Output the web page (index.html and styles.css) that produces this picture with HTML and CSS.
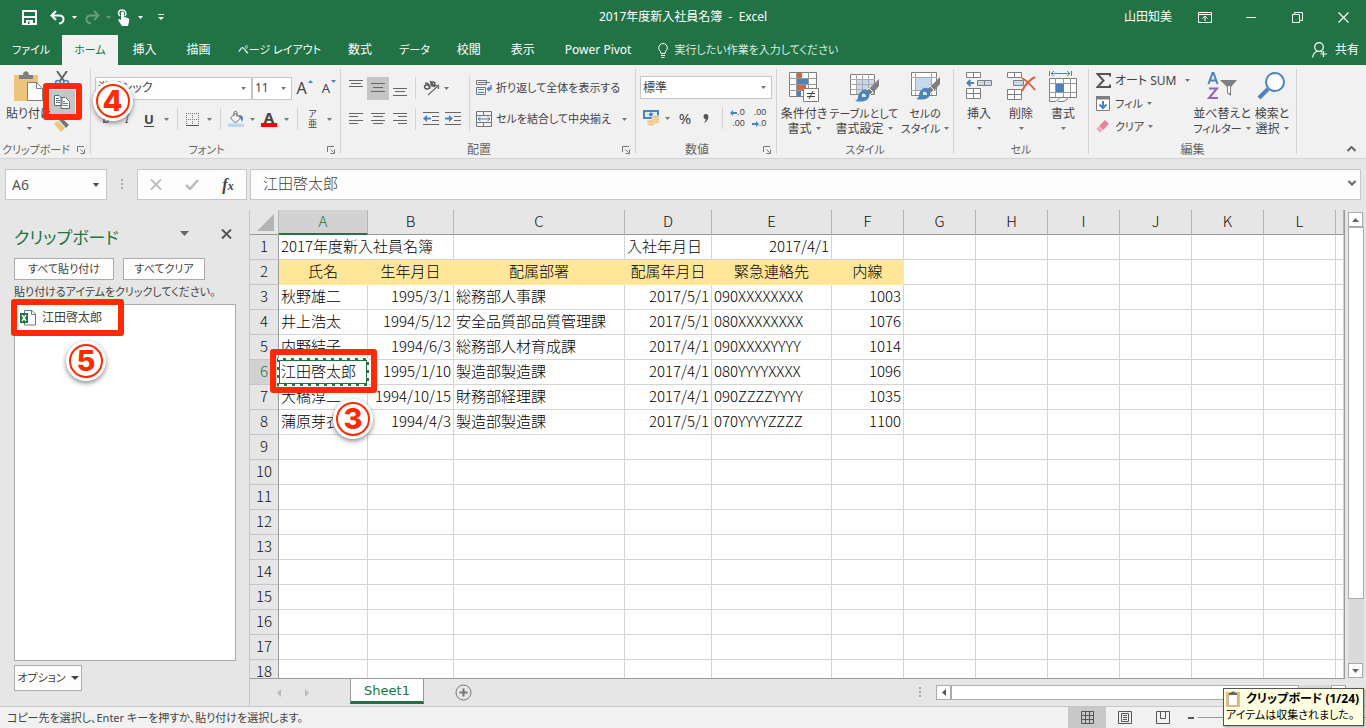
FILE: index.html
```html
<!DOCTYPE html>
<html lang="ja">
<head>
<meta charset="utf-8">
<title>2017年度新入社員名簿 - Excel</title>
<link rel="stylesheet" href="styles.css">
</head>
<body>
<svg class="defs" aria-hidden="true">
  <symbol id="caret" viewBox="0 0 5 3"><path d="M0 0h5L2.500 3z" fill="currentColor"/></symbol>
  <symbol id="launch" viewBox="0 0 8 8"><path d="M.5 6V.5H7M3.500 3.500l3 3M7.500 3.500v4h-4" fill="none" stroke="#777"/></symbol>
  <symbol id="brush" viewBox="0 0 24 24"><path d="M24 1v7l-6 7-4-4z" fill="#7f7f7f"/><path d="M14 10l4 4-3 3-4-4z" fill="#7f7f7f" stroke="#f1f1f1"/><path d="M8 12c4-1 8 3 6 7-2 5-8 5-14 4 3-1 3-3 3-5 1-3 3-5 5-6z" fill="#4a83bd"/><path d="M7 16c3-1 4 1 4 3l-4 0z" fill="#e3edf6"/></symbol>
</svg>

<header class="titlebar">
  <div class="quick">
    <button aria-label="上書き保存"><svg width="15" height="15" viewBox="0 0 15 15"><path d="M1 1h13v13H1z" fill="none" stroke="#fff" stroke-width="2"/><path d="M1 7h13" stroke="#fff" stroke-width="2"/><path d="M4 10h7v4H4z" fill="#fff"/><path d="M6 11.500h1.500V14H6z" fill="#217346"/></svg></button>
    <button aria-label="元に戻す"><svg width="15" height="15" viewBox="0 0 15 15"><path d="M6 1L1.500 5.500 6 10M2 5.500h7c6 0 6 7 0 8" fill="none" stroke="#fff" stroke-width="2"/></svg></button>
    <button aria-label="元に戻すの一覧"><svg class="caret"><use href="#caret"/></svg></button>
    <button class="dim" aria-label="やり直し"><svg width="15" height="15" viewBox="0 0 15 15"><path d="M9 1l4.500 4.500L9 10M13 5.500H6c-6 0-6 7 0 8" fill="none" stroke="#fff" stroke-width="2"/></svg></button>
    <button class="dim" aria-label="やり直しの一覧"><svg class="caret"><use href="#caret"/></svg></button>
    <button aria-label="タッチ/マウス モード"><svg width="13" height="17" viewBox="0 0 13 17"><path d="M3 7C0 4 2 1 5 1s5 3 3 6" fill="none" stroke="#fff" stroke-width="1.500"/><path d="M4 4c0-2 3-2 3 0v4l4 1c2 1 1 4 0 8H5L1 11l1-1 2 1z" fill="#fff"/></svg></button>
    <button aria-label="モードの一覧"><svg class="caret"><use href="#caret"/></svg></button>
    <button aria-label="クイック アクセスのカスタマイズ"><svg width="6" height="7" viewBox="0 0 6 7"><path d="M0 0h6v1H0zM0 3h6L3 6z" fill="#fff"/></svg></button>
  </div>
  <div class="doc-title">2017年度新入社員名簿&nbsp; - &nbsp;Excel</div>
  <div class="window">
    <span>山田知美</span>
    <button aria-label="リボンの表示オプション"><svg width="14" height="11" viewBox="0 0 14 11"><path d="M.5.5h13v10H.5zM1 2.500h12M7 9V4.500M4.500 6.500L7 4l2.500 2.500" fill="none" stroke="#fff"/></svg></button>
    <button aria-label="最小化"><svg width="11" height="11" viewBox="0 0 11 11"><path d="M0 5.500h10" stroke="#fff"/></svg></button>
    <button aria-label="元に戻す(縮小)"><svg width="11" height="11" viewBox="0 0 11 11"><path d="M.5 2.500h7v8h-7zM2.500 2V.5h8v8H8" fill="none" stroke="#fff"/></svg></button>
    <button aria-label="閉じる"><svg width="11" height="11" viewBox="0 0 11 11"><path d="M.5.5l10 10M10.500.5l-10 10" fill="none" stroke="#fff" stroke-width="1.200"/></svg></button>
  </div>
</header>

<nav class="tabs">
  <button class="kana">ファイル</button><button class="kana active">ホーム</button><button>挿入</button><button>描画</button><button class="kana">ページ レイアウト</button><button>数式</button><button class="kana">データ</button><button>校閲</button><button>表示</button><button>Power Pivot</button>
  <button class="kana tell"><svg width="10" height="15" viewBox="0 0 10 15"><path d="M3 10.500C3 8 .7 7.500.7 4.800a4.300 4.300 0 0 1 8.600 0C9.300 7.500 7 8 7 10.500zM3 12.500h4M3.500 14.500h3" fill="none" stroke="#fff"/></svg>実行したい作業を入力してください</button>
  <button class="share"><svg width="15" height="16" viewBox="0 0 15 16"><circle cx="7" cy="5" r="4.300" fill="none" stroke="#fff" stroke-width="1.200"/><path d="M.7 15.500C1 12 3 10 5.500 9M8.500 9l2 1.500M11.500 9v6M8.500 12H15" fill="none" stroke="#fff" stroke-width="1.200"/></svg>共有</button>
</nav>

<section class="ribbon">
  <div class="group clip">
    <div class="body">
      <button class="big paste"><svg width="32" height="32" viewBox="0 0 32 32"><path d="M1 4h24v26H1z" fill="#edc47b"/><path d="M6 8V4h4c0-5 6-5 6 0h4v4z" fill="#7f7f7f"/><path d="M14.500 11.500h9l6 6v12h-15z" fill="#fff" stroke="#7f7f7f"/><path d="M23.500 11.500v6h6" fill="none" stroke="#7f7f7f"/></svg><span>貼り付け</span><svg class="caret"><use href="#caret"/></svg></button>
      <div class="clip-tools">
        <button aria-label="切り取り"><svg width="16" height="16" viewBox="0 0 16 16"><path d="M3 0l7 10M13 0L6 10" stroke="#666" stroke-width="2"/><circle cx="4" cy="12" r="2.500" fill="none" stroke="#4a83bd" stroke-width="1.500"/><circle cx="12" cy="12" r="2.500" fill="none" stroke="#4a83bd" stroke-width="1.500"/></svg></button>
        <div class="copy-wrap">
        <button class="copy" aria-label="コピー"><svg width="16" height="14" viewBox="0 0 16 14"><path d="M.5.500H5L8 3.500v7H.5zM7 2.500h4.500l4 4v7H7z" fill="#fff" stroke="#666"/><path d="M2 3.500h3M2 5.500h4M2 7.500h4M9 6.500h2M9 8.500h5M9 10.500h5" stroke="#4a83bd"/></svg></button>
        <i class="mark mark-copy"></i><b class="num num-copy">4</b>
        </div>
        <button aria-label="書式のコピー/貼り付け"><svg width="16" height="16" viewBox="0 0 16 16"><path d="M0 7l4-3 7 7-4 4z" fill="#edc47b"/><path d="M5 3l3-2 7 7-3 3z" fill="#777"/></svg></button>
      </div>
    </div>
    <div class="foot"><span class="kana">クリップボード</span><button aria-label="クリップボードの詳細"><svg width="8" height="8"><use href="#launch"/></svg></button></div>
  </div>

  <div class="group font">
    <div class="body stack">
      <div class="row font-top">
        <label class="combo"><select aria-label="フォント"><option>游ゴシック</option></select><svg class="caret"><use href="#caret"/></svg></label>
        <label class="combo"><select aria-label="フォント サイズ"><option>11</option></select><svg class="caret"><use href="#caret"/></svg></label>
        <button class="grow">A<svg width="5" height="3" viewBox="0 0 5 3"><path d="M0 3h5L2.500 0z" fill="#4a83bd"/></svg></button>
        <button class="grow small">A<svg width="5" height="3" viewBox="0 0 5 3"><path d="M0 0h5L2.500 3z" fill="#4a83bd"/></svg></button>
      </div>
      <div class="row font-low">
        <button class="b">B</button><button class="i">I</button><button class="u">U</button><button aria-label="下線の種類"><svg class="caret"><use href="#caret"/></svg></button><hr>
        <button aria-label="罫線"><svg width="13" height="13" viewBox="0 0 13 13"><path d="M0 .5h13M0 6.500h13M.5 0v12M6.500 0v12M12.500 0v12" stroke="#777" stroke-dasharray="1 1"/><path d="M0 12.500h13" stroke="#555"/></svg></button><button aria-label="罫線の一覧"><svg class="caret"><use href="#caret"/></svg></button><hr>
        <button aria-label="塗りつぶしの色"><svg width="16" height="16" viewBox="0 0 16 16"><path d="M2.500 7l5-5 5 5-5 5z" fill="#fff" stroke="#666"/><path d="M6 5V1.500C6 0 9 0 9 1.500V6" fill="none" stroke="#666"/><path d="M11 4c4 0 5 3 3 7-1-2-1-4-3-5z" fill="#4a83bd"/><path d="M0 12.500h16V16H0z" fill="#bdd7f0"/></svg></button><button aria-label="色の一覧"><svg class="caret"><use href="#caret"/></svg></button>
        <button class="fontcolor">A</button><button aria-label="フォントの色の一覧"><svg class="caret"><use href="#caret"/></svg></button><hr>
        <button class="ruby"><span>ア</span><span>亜</span></button><button aria-label="ふりがなの一覧"><svg class="caret"><use href="#caret"/></svg></button>
      </div>
    </div>
    <div class="foot"><span class="kana">フォント</span><button aria-label="フォントの詳細"><svg width="8" height="8"><use href="#launch"/></svg></button></div>
  </div>

  <div class="group align">
    <div class="body">
      <div class="stack">
        <div class="row al">
          <button aria-label="上揃え"><svg width="14" height="16" viewBox="0 0 14 16"><path d="M0 .5h14M2 3.500h10M0 6.500h14" stroke="#666"/></svg></button>
          <button class="on" aria-label="上下中央揃え"><svg width="14" height="16" viewBox="0 0 14 16"><path d="M0 3.500h14M2 7.500h10M0 11.500h14" stroke="#666"/></svg></button>
          <button aria-label="下揃え"><svg width="14" height="16" viewBox="0 0 14 16"><path d="M0 8.500h14M2 11.500h10M0 15.500h14" stroke="#666"/></svg></button><hr>
          <button aria-label="方向"><svg width="17" height="16" viewBox="0 0 17 16"><g fill="none" stroke="#555" stroke-width="1.400"><ellipse cx="4" cy="7" rx="2.500" ry="2"/><path d="M2 3.500c3-1 5 2 5 5M7 1l5 6"/><circle cx="10" cy="4" r="2"/><path d="M5 15L15 6M11.500 5.500H15.500V9" stroke="#777"/></g></svg></button><button aria-label="方向の一覧"><svg class="caret"><use href="#caret"/></svg></button>
        </div>
        <div class="row al">
          <button aria-label="左揃え"><svg width="14" height="12" viewBox="0 0 14 12"><path d="M0 .5h14M0 3.500h9M0 7.500h14M0 10.500h9" stroke="#666"/></svg></button>
          <button aria-label="中央揃え"><svg width="14" height="12" viewBox="0 0 14 12"><path d="M0 .5h14M2 3.500h10M0 7.500h14M2 10.500h10" stroke="#666"/></svg></button>
          <button aria-label="右揃え"><svg width="14" height="12" viewBox="0 0 14 12"><path d="M0 .5h14M5 3.500h9M0 7.500h14M5 10.500h9" stroke="#666"/></svg></button><hr>
          <button aria-label="インデントを減らす"><svg width="16" height="14" viewBox="0 0 16 14"><path d="M0 .5h16M9 4.500h7M9 8.500h7M0 12.500h16" stroke="#666"/><path d="M0 6.500L4 3v2.500h4v2H4V10z" fill="#4a83bd"/></svg></button>
          <button aria-label="インデントを増やす"><svg width="16" height="14" viewBox="0 0 16 14"><path d="M0 .5h16M9 4.500h7M9 8.500h7M0 12.500h16" stroke="#666"/><path d="M8 6.500L4 3v2.500H0v2h4V10z" fill="#4a83bd"/></svg></button>
        </div>
      </div>
      <hr class="tall">
      <div class="stack wraps">
        <button class="line kana"><svg width="16" height="16" viewBox="0 0 16 16"><path d="M.5.500h10v4H.5zM.5 7.500h9v7H.5z" fill="none" stroke="#777"/><path d="M2 2.500h12M2 9.500h6M2 12.500h6" stroke="#4a83bd"/><path d="M15 5v4h-3M13.500 7l-2 2 2 2" fill="none" stroke="#4a83bd" stroke-width="1.500"/></svg>折り返して全体を表示する</button>
        <button class="line kana"><svg width="16" height="16" viewBox="0 0 16 16"><path d="M.5.500h15v15H.5zM0 4.500h16M0 11.500h16M7.500 0v4M7.500 12v4" fill="none" stroke="#777"/><path d="M2 8h12M4.500 6L2 8l2.500 2M11.500 6L14 8l-2.500 2" fill="none" stroke="#4a83bd"/></svg>セルを結合して中央揃え<svg class="caret end"><use href="#caret"/></svg></button>
      </div>
    </div>
    <div class="foot"><span>配置</span><button aria-label="配置の詳細"><svg width="8" height="8"><use href="#launch"/></svg></button></div>
  </div>

  <div class="group number">
    <div class="body stack">
      <label class="combo"><select aria-label="表示形式"><option>標準</option></select><svg class="caret"><use href="#caret"/></svg></label>
      <div class="row nm">
        <button aria-label="通貨表示形式"><svg width="17" height="16" viewBox="0 0 17 16"><path d="M0 0h16v9H0z" fill="#4a83bd"/><path d="M2 2h12v5H2z" fill="#dce9f5"/><circle cx="8" cy="4.500" r="2" fill="#4a83bd"/><g fill="#edc47b" stroke="#f1f1f1" stroke-width=".6"><ellipse cx="12.500" cy="12" rx="4" ry="1.700"/><ellipse cx="12.500" cy="9.500" rx="4" ry="1.700"/><ellipse cx="12.500" cy="7" rx="4" ry="1.700"/><ellipse cx="8" cy="14" rx="4" ry="1.700"/><ellipse cx="8" cy="11.500" rx="4" ry="1.700"/></g></svg></button><button aria-label="通貨の一覧"><svg class="caret"><use href="#caret"/></svg></button>
        <button class="pct">%</button><button class="comma" aria-label="桁区切り"><svg width="6" height="9" viewBox="0 0 6 9"><path d="M2.500 0C5 0 6 2 5 5 4 7 3 8 1 9c1-2 2-2 1.500-4C0 5 0 0 2.500 0z" fill="#555"/></svg></button><hr>
        <button class="dec"><span><svg width="7" height="6" viewBox="0 0 7 6"><path d="M0 3L3 0v2h4v2H3v2z" fill="#4a83bd"/></svg>.0</span><span>.00</span></button>
        <button class="dec"><span>.00</span><span><svg width="7" height="6" viewBox="0 0 7 6"><path d="M7 3L4 0v2H0v2h4v2z" fill="#4a83bd"/></svg>.0</span></button>
      </div>
    </div>
    <div class="foot"><span>数値</span><button aria-label="数値の詳細"><svg width="8" height="8"><use href="#launch"/></svg></button></div>
  </div>

  <div class="group styles">
    <div class="body">
      <button class="big"><svg width="32" height="32" viewBox="0 0 32 32"><path d="M1.500 1.500h27v24h-27z" fill="#fff" stroke="#7f7f7f"/><path d="M8.500 1v24M20.500 1v24M1 7.500h27M1 13.500h27M1 19.500h27" stroke="#999"/><path d="M9 2h5v5H9zM9 14h9v5H9z" fill="#d86344"/><path d="M9 8h11v5H9zM9 20h4v5H9z" fill="#4a83bd"/><path d="M15.500 17.500h15v13h-15z" fill="#fff" stroke="#7f7f7f"/><path d="M19 22.500h8M19 25.500h8M25 20l-4 8" stroke="#444"/></svg><span>条件付き</span><span>書式<svg class="caret"><use href="#caret"/></svg></span></button>
      <button class="big"><svg width="32" height="32" viewBox="0 0 32 32"><path d="M2.500 3.500h24v20h-24z" fill="#fff" stroke="#7f7f7f"/><path d="M9 9h17v14H9z" fill="#c5d8ec"/><path d="M2 8.500h25M2 13.500h25M2 18.500h25M8.500 3v20M14.500 3v20M20.500 3v20" stroke="#aaa"/><use href="#brush" x="7" y="7" width="24" height="24"/></svg><span class="kana">テーブルとして</span><span>書式設定<svg class="caret"><use href="#caret"/></svg></span></button>
      <button class="big"><svg width="32" height="32" viewBox="0 0 32 32"><path d="M2.500 1.500h25v23h-25z" fill="#fff" stroke="#7f7f7f"/><path d="M7 7h15v12H7z" fill="#c5d8ec"/><path d="M2 6.500h26M2 19.500h26M6.500 1v23M22.500 1v23" stroke="#aaa"/><use href="#brush" x="7" y="5" width="24" height="24"/></svg><span class="kana">セルの</span><span class="kana">スタイル<svg class="caret"><use href="#caret"/></svg></span></button>
    </div>
    <div class="foot"><span class="kana">スタイル</span></div>
  </div>

  <div class="group cells">
    <div class="body">
      <button class="big"><svg width="30" height="32" viewBox="0 0 30 32"><path d="M2.500 1.500h14v5h-14zM9.500 1.500v5M2.500 17.500h14v10h-14zM2.500 22.500h14M9.500 17.500v10" fill="#fff" stroke="#7f7f7f"/><path d="M13.500 9.500h14v5h-14zM20.500 9.500v5" fill="#c5d8ec" stroke="#7f7f7f"/><path d="M10 12H4M6.500 9L3.500 12l3 3" fill="none" stroke="#4a83bd" stroke-width="2"/></svg><span>挿入</span><svg class="caret low"><use href="#caret"/></svg></button>
      <button class="big"><svg width="30" height="32" viewBox="0 0 30 32"><path d="M1.500 1.500h14v5h-14zM8.500 1.500v5M1.500 18.500h14v10h-14zM1.500 23.500h14M8.500 18.500v10" fill="#fff" stroke="#7f7f7f"/><path d="M7.500 9.500h10v5h-10z" fill="#c5d8ec" stroke="#7f7f7f"/><path d="M16 7c5 3 9 7 13 12M29 6c-6 3-10 8-13 14" fill="none" stroke="#d86344" stroke-width="2"/></svg><span>削除</span><svg class="caret low"><use href="#caret"/></svg></button>
      <button class="big"><svg width="30" height="32" viewBox="0 0 30 32"><path d="M1.500 0v5M23.500 0v5M3 2.500h19M6 0L3 2.500 6 5M19 0l3 2.500L19 5" fill="none" stroke="#4a83bd"/><path d="M1.500 7.500h27v19h-27z" fill="#fff" stroke="#7f7f7f"/><path d="M7.500 7v19M15.500 7v19M22.500 7v19M1 12.500h27M1 21.500h27" stroke="#999"/><path d="M8 13h8v8H8z" fill="#4a83bd"/><path d="M1.500 27v3.500H8l3-3M10 30.500h6l4-3" fill="none" stroke="#7f7f7f"/></svg><span>書式</span><svg class="caret low"><use href="#caret"/></svg></button>
    </div>
    <div class="foot"><span class="kana">セル</span></div>
  </div>

  <div class="group edit">
    <div class="body">
      <div class="stack edits">
        <button class="line"><svg width="15" height="15" viewBox="0 0 15 15"><path d="M14 3.500V1H1.500l6 6.500-6 6.500H14v-2.500" fill="none" stroke="#555" stroke-width="2"/></svg>オート SUM<svg class="caret end"><use href="#caret"/></svg></button>
        <button class="line kana"><svg width="15" height="15" viewBox="0 0 15 15"><path d="M.5.500h13v14H.5z" fill="#fff" stroke="#7f7f7f"/><path d="M0 0h14v3.500H0z" fill="#7f7f7f"/><path d="M7 5v7M3.500 8.500L7 12l3.500-3.500" fill="none" stroke="#4a83bd" stroke-width="2"/></svg>フィル<svg class="caret"><use href="#caret"/></svg></button>
        <button class="line kana"><svg width="15" height="15" viewBox="0 0 15 15"><path d="M9 1l4 4-6 6-4-4z" fill="#e8839a"/><path d="M2.500 7.500l4 4-2.500 2-3.500-3.500z" fill="#f0a5b5"/></svg>クリア<svg class="caret"><use href="#caret"/></svg></button>
      </div>
      <button class="big"><svg width="30" height="32" viewBox="0 0 30 32"><path d="M1.500 13L5.500 2h1l4 11M3 9.500h6" fill="none" stroke="#4a83bd" stroke-width="2"/><path d="M2 17.500h8l-8 9.500h9" fill="none" stroke="#9862bd" stroke-width="2"/><path d="M13 9h17l-6 7v9l-4-3v-6z" fill="#7f7f7f"/><path d="M21 15h2v7h-2z" fill="#fff"/></svg><span>並べ替えと</span><span class="kana">フィルター<svg class="caret"><use href="#caret"/></svg></span></button>
      <button class="big"><svg width="30" height="32" viewBox="0 0 30 32"><circle cx="18" cy="11" r="9" fill="#fff" stroke="#4a83bd" stroke-width="2"/><path d="M11 18L2 27" stroke="#4a83bd" stroke-width="4"/></svg><span>検索と</span><span>選択<svg class="caret"><use href="#caret"/></svg></span></button>
    </div>
    <div class="foot"><span>編集</span></div>
  </div>
  <button class="collapse" aria-label="リボンを折りたたむ"><svg width="9" height="6" viewBox="0 0 9 6"><path d="M.5 5l4-4 4 4" fill="none" stroke="#666" stroke-width="2"/></svg></button>
</section>

<section class="formula">
  <label class="namebox"><input value="A6" aria-label="名前ボックス"><svg width="8" height="4" viewBox="0 0 5 3"><use href="#caret"/></svg></label>
  <svg class="dots" width="2" height="11" viewBox="0 0 2 11"><path d="M0 0h2v2H0zM0 4h2v2H0zM0 8h2v2H0z" fill="#aaa"/></svg>
  <div class="fx">
    <button aria-label="キャンセル"><svg width="12" height="11" viewBox="0 0 12 11"><path d="M1 .5l10 10M11 .5l-10 10" stroke="#bbb" stroke-width="1.800"/></svg></button>
    <button aria-label="入力"><svg width="14" height="11" viewBox="0 0 14 11"><path d="M1 6l4 4 8-9" fill="none" stroke="#bbb" stroke-width="2.500"/></svg></button>
    <button class="fn"><i>f</i><small>x</small></button>
  </div>
  <label class="fvalue"><input value="江田啓太郎" aria-label="数式バー"><svg width="8" height="6" viewBox="0 0 8 6"><path d="M.5 1L4 4.500 7.500 1" fill="none" stroke="#666" stroke-width="2"/></svg></label>
</section>

<main class="work">
  <aside class="pane">
    <div class="pane-head"><h2>クリップボード</h2><button aria-label="作業ウィンドウのオプション"><svg width="9" height="5" viewBox="0 0 5 3" preserveAspectRatio="none"><use href="#caret"/></svg></button><button aria-label="閉じる"><svg width="11" height="10" viewBox="0 0 11 10"><path d="M1 .5l9 9M10 .5l-9 9" stroke="#555" stroke-width="2"/></svg></button></div>
    <div class="pane-actions kana"><button>すべて貼り付け</button><button>すべてクリア</button></div>
    <p class="kana">貼り付けるアイテムをクリックしてください。</p>
    <div class="cliplist">
      <button class="clipitem"><svg width="17" height="16" viewBox="0 0 17 16"><path d="M4.500 3V.500H12L15.500 4v11h-11V13" fill="#fff" stroke="#777"/><path d="M11.500.500V4.500h4" fill="none" stroke="#777"/><path d="M0 3h8v10H0z" fill="#217346"/><path d="M2 5l4 6M6 5l-4 6" stroke="#fff" stroke-width="1.400"/></svg>江田啓太郎</button>
      <i class="mark mark-item"></i><b class="num num-item">5</b>
    </div>
    <button class="options kana">オプション<svg width="8" height="4" viewBox="0 0 5 3" preserveAspectRatio="none"><use href="#caret"/></svg></button>
  </aside>

  <div class="book">
    <div class="sheet-area">
      <div class="sheet">
        <table>
          <colgroup><col class="c-row"><col class="c-a"><col class="c-b"><col class="c-c"><col class="c-d"><col class="c-e"><col class="c-n" span="7"><col></colgroup>
          <thead><tr><th class="corner"><svg width="17" height="17" viewBox="0 0 17 17"><path d="M17 0v17H0z" fill="#b4b4b4"/></svg></th><th class="sel">A</th><th>B</th><th>C</th><th>D</th><th>E</th><th>F</th><th>G</th><th>H</th><th>I</th><th>J</th><th>K</th><th>L</th><th></th></tr></thead>
          <tbody>
          <tr><th>1</th><td class="spill">2017年度新入社員名簿</td><td></td><td></td><td>入社年月日</td><td class="r">2017/4/1</td><td><td><td><td><td><td><td><td></tr>
          <tr class="heads"><th>2</th><td>氏名</td><td>生年月日</td><td>配属部署</td><td>配属年月日</td><td>緊急連絡先</td><td>内線</td><td><td><td><td><td><td><td></tr>
          <tr><th>3</th><td>秋野雄二</td><td class="r">1995/3/1</td><td>総務部人事課</td><td class="r">2017/5/1</td><td>090XXXXXXXX</td><td class="r">1003</td><td><td><td><td><td><td><td></tr>
          <tr><th>4</th><td>井上浩太</td><td class="r">1994/5/12</td><td>安全品質部品質管理課</td><td class="r">2017/5/1</td><td>080XXXXXXXX</td><td class="r">1076</td><td><td><td><td><td><td><td></tr>
          <tr><th>5</th><td>内野結子</td><td class="r">1994/6/3</td><td>総務部人材育成課</td><td class="r">2017/4/1</td><td>090XXXXYYYY</td><td class="r">1014</td><td><td><td><td><td><td><td></tr>
          <tr><th class="sel">6</th><td class="picked">江田啓太郎<svg class="ants"><rect class="base"/><rect class="dash"/></svg><i class="mark mark-cell"></i><b class="num num-cell">3</b></td><td class="r">1995/1/10</td><td>製造部製造課</td><td class="r">2017/4/1</td><td>080YYYYXXXX</td><td class="r">1096</td><td><td><td><td><td><td><td></tr>
          <tr><th>7</th><td>大橋淳二</td><td class="r">1994/10/15</td><td>財務部経理課</td><td class="r">2017/4/1</td><td>090ZZZZYYYY</td><td class="r">1035</td><td><td><td><td><td><td><td></tr>
          <tr><th>8</th><td>蒲原芽衣</td><td class="r">1994/4/3</td><td>製造部製造課</td><td class="r">2017/5/1</td><td>070YYYYZZZZ</td><td class="r">1100</td><td><td><td><td><td><td><td></tr>
          <tr><th>9</th><td><td><td><td><td><td><td><td><td><td><td><td><td></tr>
          <tr><th>10</th><td><td><td><td><td><td><td><td><td><td><td><td><td></tr>
          <tr><th>11</th><td><td><td><td><td><td><td><td><td><td><td><td><td></tr>
          <tr><th>12</th><td><td><td><td><td><td><td><td><td><td><td><td><td></tr>
          <tr><th>13</th><td><td><td><td><td><td><td><td><td><td><td><td><td></tr>
          <tr><th>14</th><td><td><td><td><td><td><td><td><td><td><td><td><td></tr>
          <tr><th>15</th><td><td><td><td><td><td><td><td><td><td><td><td><td></tr>
          <tr><th>16</th><td><td><td><td><td><td><td><td><td><td><td><td><td></tr>
          <tr><th>17</th><td><td><td><td><td><td><td><td><td><td><td><td><td></tr>
          <tr><th>18</th><td><td><td><td><td><td><td><td><td><td><td><td><td></tr>
          </tbody>
        </table>
      </div>
      <div class="vscroll"><button aria-label="上へ"><svg width="7" height="4" viewBox="0 0 7 4"><path d="M0 4h7L3.500 0z" fill="#666"/></svg></button><div class="thumb"></div><button aria-label="下へ"><svg width="7" height="4" viewBox="0 0 7 4"><path d="M0 0h7L3.500 4z" fill="#666"/></svg></button></div>
    </div>
    <div class="sheetbar">
      <div class="sheetnav"><button aria-label="前のシート"><svg width="4" height="8" viewBox="0 0 4 8"><path d="M4 0v8L0 4z" fill="#bbb"/></svg></button><button aria-label="次のシート"><svg width="4" height="8" viewBox="0 0 4 8"><path d="M0 0v8l4-4z" fill="#bbb"/></svg></button></div>
      <button class="sheettab">Sheet1</button>
      <button class="add" aria-label="新しいシート"><svg width="17" height="17" viewBox="0 0 17 17"><circle cx="8.500" cy="8.500" r="7.500" fill="none" stroke="#777"/><path d="M8.500 4.500v8M4.500 8.500h8" stroke="#777" stroke-width="2"/></svg></button>
      <svg class="dots" width="2" height="11" viewBox="0 0 2 11"><path d="M0 0h2v2H0zM0 4h2v2H0zM0 8h2v2H0z" fill="#aaa"/></svg>
      <div class="hscroll"><button aria-label="左へ"><svg width="4" height="7" viewBox="0 0 4 7"><path d="M4 0v7L0 3.500z" fill="#555"/></svg></button><div class="thumb"></div><button aria-label="右へ"><svg width="4" height="7" viewBox="0 0 4 7"><path d="M0 0v7l4-3.500z" fill="#555"/></svg></button></div>
    </div>
  </div>
</main>

<footer class="status">
  <span class="message kana">コピー先を選択し、Enter キーを押すか、貼り付けを選択します。</span>
  <button class="view on" aria-label="標準"><svg width="13" height="13" viewBox="0 0 13 13"><path d="M.5.500h12v12H.5zM4.500 0v13M8.500 0v13M0 4.500h13M0 8.500h13" fill="none" stroke="#555"/></svg></button>
  <button class="view" aria-label="ページ レイアウト"><svg width="14" height="13" viewBox="0 0 14 13"><path d="M.5.500h13v12H.5zM3.500 2.500h7v8h-7zM5 4.500h4M5 6.500h4M5 8.500h4" fill="none" stroke="#555"/></svg></button>
  <button class="view" aria-label="改ページ プレビュー"><svg width="14" height="13" viewBox="0 0 14 13"><path d="M.5.500h13v12H.5zM4.500 0v7.500h5V0" fill="none" stroke="#555"/></svg></button>
  <button class="zoomout" aria-label="縮小"><svg width="6" height="2"><path d="M0 0h6v2H0z" fill="#555"/></svg></button>
  <input class="zoombar" type="range" aria-label="ズーム" value="60">
  <div class="tip" role="status"><strong><svg width="14" height="16" viewBox="0 0 14 16"><path d="M0 1h14v15H0z" fill="#e9bd75"/><path d="M2.500 3.500h9v11h-9z" fill="#fff" stroke="#999" stroke-width=".6"/><path d="M3 4V2h2c0-2 4-2 4 0h2v2z" fill="#666"/></svg>クリップボード (1/24)</strong><span class="kana">アイテムは収集されました。</span></div>
</footer>
</body>
</html>
```
FILE: styles.css
```css
* { box-sizing: border-box; }
body {
  margin: 0; height: 100vh; display: flex; flex-direction: column; overflow: hidden;
  background: #e6e6e6; color: #444;
  font: 12px/16px "Noto Sans", "Noto Sans CJK JP", sans-serif;
  font-feature-settings: "palt";
}
button, input, select { font: inherit; color: inherit; font-feature-settings: inherit; }
button { border: 0; padding: 0; background: none; display: flex; align-items: center; justify-content: center; white-space: nowrap; }
svg { flex: none; display: block; }
hr { margin: 0; border: 0; width: 1px; height: 22px; background: #d4d4d4; }
.defs { position: absolute; width: 0; height: 0; }
.caret { width: 5px; height: 3px; color: #777; }
.kana { font-size: 11px; }

.titlebar { height: 34px; display: grid; grid-template-columns: 1fr auto 1fr; align-items: center; background: #217346; color: #fff; }
.quick { display: grid; grid-template-columns: 30px 26px 8px 28px 5px 24px 10px 32px; padding-left: 14px; }
.quick .caret { color: #fff; }
.quick .dim { opacity: .3; }
.window { display: flex; justify-content: flex-end; align-items: center; }
.window span { margin-right: 10px; }
.window button { width: 46px; height: 30px; }

.tabs { height: 31px; display: flex; background: #217346; color: #fff; }
.tabs button { padding: 0 15px; margin-top: 1px; height: 30px; }
.tabs .kana { padding: 0 12px; }
.tabs .active { background: #f1f1f1; color: #217346; }
.tabs .tell { gap: 6px; color: #dcebe2; }
.tabs .share { margin-left: auto; padding-right: 7px; gap: 8px; }

.ribbon { height: 94px; flex: none; display: flex; background: #f1f1f1; border-bottom: 1px solid #d2d2d2; padding-bottom: 4px; }
.group { display: flex; flex-direction: column; justify-content: space-between; border-right: 1px solid #d4d4d4; margin-top: 4px; }
.body { display: flex; }
.stack { display: flex; flex-direction: column; }
.foot { display: flex; align-items: center; height: 16px; color: #666; margin-bottom: -4px; }
.foot span { flex: 1; text-align: center; white-space: nowrap; }
.foot button { width: 18px; height: 16px; }
.row { display: grid; height: 24px; align-items: center; justify-items: center; }
.row button { height: 22px; }
.big { flex-direction: column; justify-content: flex-start; line-height: 15px; padding-top: 2px; }
.big > svg:first-child { margin-bottom: 3px; }
.big span { display: flex; align-items: center; gap: 4px; }
.big .low { margin-top: 6px; }
.line { justify-content: flex-start; gap: 4px; height: 24px; }
.line .end { margin-left: auto; }
.combo { display: flex; align-items: center; width: 100%; height: 23px; background: #fff; border: 1px solid #c6c6c6; padding-right: 5px; }
.combo select { appearance: none; border: 0; background: none; flex: 1; min-width: 0; padding: 0 2px; }

.clip { width: 91px; }
.clip .body { padding-left: 6px; }
.paste { width: 46px; align-items: flex-start; }
.paste > svg:first-child { margin-left: 7px; }
.paste .caret { margin: 6px 0 0 21px; }
.clip-tools { display: flex; flex-direction: column; align-items: center; width: 20px; padding-top: 2px; gap: 3px; }
.copy-wrap { position: relative; }
.copy { width: 25px; height: 24px; background: #c5c5c5; }

.font { width: 250px; }
.font .body, .number .body { padding: 7px 4px 0; gap: 7px; }
.font-top { grid-template-columns: 157px 40px 25px 24px; }
.font-low { grid-template-columns: 22px 20px 24px 11px 10px 21px 12px 10px 22px 10px 24px 11px 10px 21px 12px; }
.grow { font-size: 16px; align-items: flex-start; gap: 1px; line-height: 22px; }
.grow svg { margin-top: 3px; }
.small { font-size: 13px; }
.b { font-weight: 700; }
.i { font-style: italic; }
.u { font-size: 13px; font-weight: 700; text-decoration: underline; text-underline-offset: 2px; }
.row .fontcolor { font-size: 15px; font-weight: 700; line-height: 12px; height: 16px; width: 16px; border-bottom: 4px solid #f00; }
.row .ruby { flex-direction: column; font-size: 9px; line-height: 10px; }

.align { width: 295px; }
.align .body { padding: 7px 8px 0 4px; }
.align .stack { gap: 7px; }
.al { grid-template-columns: 22px 22px 22px 9px 22px 22px; }
.al .on { width: 22px; height: 23px; background: #c5c5c5; }
.al button:nth-child(6):has(.caret) { justify-self: start; padding-left: 2px; }
.tall { height: 55px; margin: 0 6px 0 5px; }
.align .wraps { flex: 1; }

.number { width: 141px; }
.nm { grid-template-columns: 22px 10px 26px 16px 16px 15px 28px; }
.pct { font-size: 15px; }
.dec { flex-direction: column; align-items: flex-end; font: 9px/11px "Liberation Sans", sans-serif; }
.dec span { display: flex; align-items: center; }

.styles { width: 177px; }
.styles .body { display: grid; grid-template-columns: 50px 70px 52px; padding-left: 2px; }
.cells { width: 135px; }
.cells .body { display: grid; grid-template-columns: 42px 42px 42px; padding-left: 4px; }
.edit { width: 208px; }
.edit .body { padding-left: 7px; }
.edits { width: 94px; margin-right: 5px; }
.edits .line { height: 23px; }
.edit .big { width: 54px; }
.edit .big + .big { width: 46px; }
.collapse { margin-left: auto; align-self: flex-end; padding: 0 10px 2px; }

.formula { display: flex; align-items: center; height: 51px; flex: none; padding: 10px 5px; }
.namebox, .fx, .fvalue { display: flex; align-items: center; height: 31px; background: #fdfdfd; border: 1px solid #c6c6c6; }
.formula input { border: 0; background: none; min-width: 0; flex: 1; outline: 0; }
.namebox { width: 102px; padding: 0 6px; color: #555; font-size: 14px; }
.namebox input { padding: 0; }
.formula .dots { margin: 0 14px; }
.fx { width: 110px; padding: 0; margin-right: 3px; }
.fx button { flex: 1; }
.fn i { font: italic 700 16px "Liberation Serif", serif; }
.fn small { font: italic 700 12px "Liberation Serif", serif; padding-top: 4px; }
.fvalue { flex: 1; font: 300 15px/20px "Noto Sans CJK JP", sans-serif; padding: 0 4px 3px 10px; font-feature-settings: normal; }

.work { flex: 1; min-height: 0; display: flex; }
.pane { width: 249px; display: flex; flex-direction: column; align-items: flex-start; padding: 12px 13px 15px 14px; }
.pane-head { display: flex; align-items: center; align-self: stretch; height: 32px; color: #666; }
.pane h2 { flex: 1; margin: 0; font-size: 17px; font-weight: 400; line-height: 28px; color: #217346; }
.pane-head button { width: 20px; height: 20px; margin-bottom: 9px; }
.pane-head button + button { margin-left: 22px; }
.pane-actions { display: flex; gap: 9px; margin-top: 4px; }
.pane-actions button { width: 100px; height: 22px; border: 1px solid #ababab; background: #fdfdfd; }
.pane-actions button + button { width: 82px; }
.pane p { margin: 4px 0; white-space: nowrap; }
.cliplist { position: relative; flex: 1; width: 222px; background: #fff; border: 1px solid #ababab; }
.clipitem { gap: 5px; padding: 5px; font-size: 12px; }
.options { height: 26px; width: 68px; margin-top: 4px; gap: 5px; border: 1px solid #ababab; background: #fdfdfd; }

.book { flex: 1; min-width: 0; display: flex; flex-direction: column; border-left: 1px solid #c6c6c6; }
.sheet-area { flex: 1; min-height: 0; display: flex; }
.sheet { flex: 1; min-width: 0; overflow: hidden; border-right: 1px solid #999; border-bottom: 1px solid #999; }
table { table-layout: fixed; width: 100%; border-collapse: separate; border-spacing: 0; font: 300 15px/20px "Noto Sans CJK JP", sans-serif; font-feature-settings: normal; color: #000; }
.c-row { width: 29px; }
.c-a { width: 89px; }
.c-b { width: 86px; }
.c-c { width: 171px; }
.c-d { width: 87px; }
.c-e { width: 120px; }
.c-n { width: 72px; }
th { font-weight: 300; padding: 0 0 2px; height: 25px; background: #e6e6e6; border-right: 1px solid #999; border-bottom: 1px solid #c6c6c6; color: #111; }
thead th { border-right-color: #b5b5b5; border-bottom-color: #999; }
thead th.sel { background: #d2d2d2; color: #217346; border-bottom: 2px solid #217346; }
tbody th.sel { background: #d2d2d2; color: #217346; }
.corner svg { margin: 3px 0 0 7px; }
td { background: #fff; height: 25px; padding: 0 2px 2px; border-right: 1px solid #d4d4d4; border-bottom: 1px solid #d4d4d4; white-space: nowrap; }
.spill { border-right-color: #fff; overflow: visible; position: relative; }
.r { text-align: right; }
.heads td:nth-child(-n+7) { background: #ffe699; border-color: #ffe699; text-align: center; }
.picked { position: relative; }
.ants { position: absolute; left: -2px; top: -2px; width: 92px; height: 28px; }
.ants rect { x: 1px; y: 1px; width: 90px; height: 26px; fill: none; stroke-width: 4; stroke: #217346; }
.ants .dash { stroke: #fff; stroke-width: 2; stroke-dasharray: 5 3; }

.vscroll { width: 21px; padding: 2px 2px 1px 3px; display: flex; flex-direction: column; }
.vscroll button, .hscroll button { width: 15px; height: 15px; flex: none; background: #fff; border: 1px solid #ababab; }
.vscroll .thumb { flex: 0 1 372px; background: #fff; border: 1px solid #ababab; }
.vscroll button:last-child { margin-top: auto; }
.vscroll, .hscroll { background-clip: content-box; background-color: #dadada; }

.sheetbar { height: 27px; flex: none; display: flex; align-items: center; }
.sheetnav { width: 100px; display: flex; gap: 24px; padding-left: 27px; }
.sheettab { width: 74px; height: 25px; align-self: flex-start; font: 13px "DejaVu Sans", sans-serif; background: #fff; color: #217346; border: 1px solid #999; border-width: 0 1px 3px; border-bottom-color: #217346; }
.add { margin-left: 31px; }
.sheetbar .dots { margin-left: auto; }
.hscroll { width: 410px; margin: 0 20px 0 15px; display: flex; }
.hscroll .thumb { flex: 0 1 348px; background: #fff; border: 1px solid #ababab; }
.hscroll button:last-child { margin-left: auto; }

.status { position: relative; height: 22px; flex: none; display: flex; align-items: center; background: #f1f1f1; border-top: 1px solid #c6c6c6; }
.message { flex: 1; padding-left: 7px; }
.view { width: 38px; height: 21px; }
.view.on { background: #c8c8c8; }
.zoomout { margin-left: 6px; }
.zoombar { appearance: none; width: 168px; height: 1px; margin: 0 0 0 4px; background: #999; }
.zoombar::-webkit-slider-thumb { appearance: none; width: 5px; height: 11px; background: #555; }
.tip { position: absolute; right: 2px; bottom: 2px; width: 141px; padding: 2px; background: #ffffe1; color: #000; border: 1px solid #555; white-space: nowrap; box-shadow: 1px 1px 2px #999; }
.tip strong, .tip span { display: flex; align-items: center; line-height: 16px; }
.tip strong { gap: 6px; }

.mark { position: absolute; z-index: 2; border: 6px solid #ff2a00; border-radius: 3px; pointer-events: none; }
.num { position: absolute; z-index: 3; width: 34px; height: 34px; border-radius: 50%; background: #fff; border: 2px solid #ff2a00; box-shadow: 0 0 0 3px #fff, 0 2px 5px 3px #888; color: #ff2a00; font: 800 29px/30px Inter, "Liberation Sans", sans-serif; text-align: center; }
.mark-copy { left: -7px; top: -7px; width: 39px; height: 37px; }
.num-copy { left: 46px; top: -6px; }
.mark-item { left: -4px; top: -6px; width: 113px; height: 37px; }
.num-item { left: 54px; top: 39px; }
.mark-cell { left: -9px; top: -11px; width: 107px; height: 44px; }
.num-cell { left: 57px; top: 42px; }
```
